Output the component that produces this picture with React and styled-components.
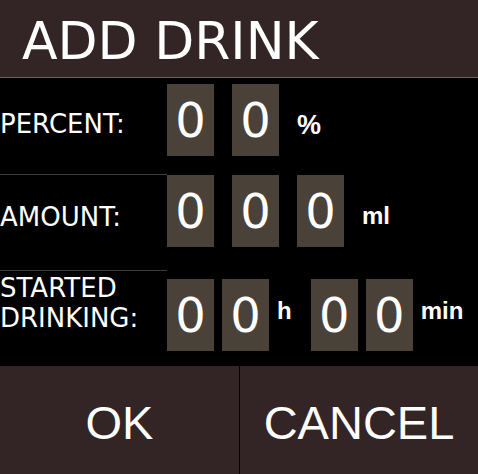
import styled, { createGlobalStyle } from 'styled-components';

const GlobalStyle = createGlobalStyle`
  * {
    box-sizing: border-box;
  }
  body {
    margin: 0;
    background: #000;
    font-family: 'DejaVu Sans', Verdana, sans-serif;
    color: #fff;
  }
`;

const Screen = styled.div`
  width: 478px;
  height: 474px;
  display: flex;
  flex-direction: column;
  background: #000;
  overflow: hidden;
`;

const Header = styled.header`
  height: 78px;
  padding: 11px 0 0 22px;
  background: #332525;
  border-bottom: 1px solid #6e6052;
`;

const Title = styled.h1`
  margin: 0;
  font-family: 'DejaVu Sans', Verdana, sans-serif;
  font-weight: normal;
  font-size: 52px;
  line-height: normal;
  color: #fff;
`;

const Form = styled.main`
  display: flex;
  flex-direction: column;
`;

const Row = styled.div`
  height: 96px;
  display: flex;
`;

const Label = styled.div`
  width: 167px;
  flex-shrink: 0;
  padding-top: ${props => props.$top}px;
  border-top: ${props => (props.$line ? '1px solid #3c3c3c' : '0')};
  font-size: 26px;
  line-height: 30px;
  white-space: nowrap;
`;

const Controls = styled.div`
  display: flex;
  align-items: flex-start;
  gap: ${props => props.$gap}px;
  padding-top: ${props => props.$top}px;
`;

const Group = styled.div`
  display: flex;
  align-items: flex-start;
  gap: 8px;
`;

const Digit = styled.div`
  width: 47px;
  height: 72px;
  display: flex;
  align-items: center;
  justify-content: center;
  background: #4a4239;
  font-size: 48px;
  line-height: 72px;
`;

const Unit = styled.span`
  margin-top: ${props => props.$top}px;
  font-family: 'Liberation Sans', Arial, sans-serif;
  font-weight: bold;
  font-size: ${props => props.$size || 24}px;
  line-height: 1;
`;

const Footer = styled.footer`
  flex: 1;
  display: grid;
  grid-template-columns: 239px 1fr;
  gap: 1px;
  background: #000;
`;

const Button = styled.button`
  border: 0;
  padding: 5px 0 0;
  background: #332525;
  color: #fff;
  font-family: 'Liberation Sans', Arial, sans-serif;
  font-size: 47px;
  cursor: pointer;
`;

function App() {
  return (
    <Screen>
      <GlobalStyle />
      <Header>
        <Title>ADD DRINK</Title>
      </Header>
      <Form>
        <Row>
          <Label $top={31}>PERCENT:</Label>
          <Controls $gap={18} $top={6}>
            <Digit>0</Digit>
            <Digit>0</Digit>
            <Unit $size={27} $top={28}>%</Unit>
          </Controls>
        </Row>
        <Row>
          <Label $line $top={27}>AMOUNT:</Label>
          <Controls $gap={18} $top={1}>
            <Digit>0</Digit>
            <Digit>0</Digit>
            <Digit>0</Digit>
            <Unit $top={29}>ml</Unit>
          </Controls>
        </Row>
        <Row>
          <Label $line $top={2}>
            STARTED
            <br />
            DRINKING:
          </Label>
          <Controls $gap={19} $top={9}>
            <Group>
              <Digit>0</Digit>
              <Digit>0</Digit>
              <Unit $top={20}>h</Unit>
            </Group>
            <Group>
              <Digit>0</Digit>
              <Digit>0</Digit>
              <Unit $top={20}>min</Unit>
            </Group>
          </Controls>
        </Row>
      </Form>
      <Footer>
        <Button>OK</Button>
        <Button>CANCEL</Button>
      </Footer>
    </Screen>
  );
}

export default App;
